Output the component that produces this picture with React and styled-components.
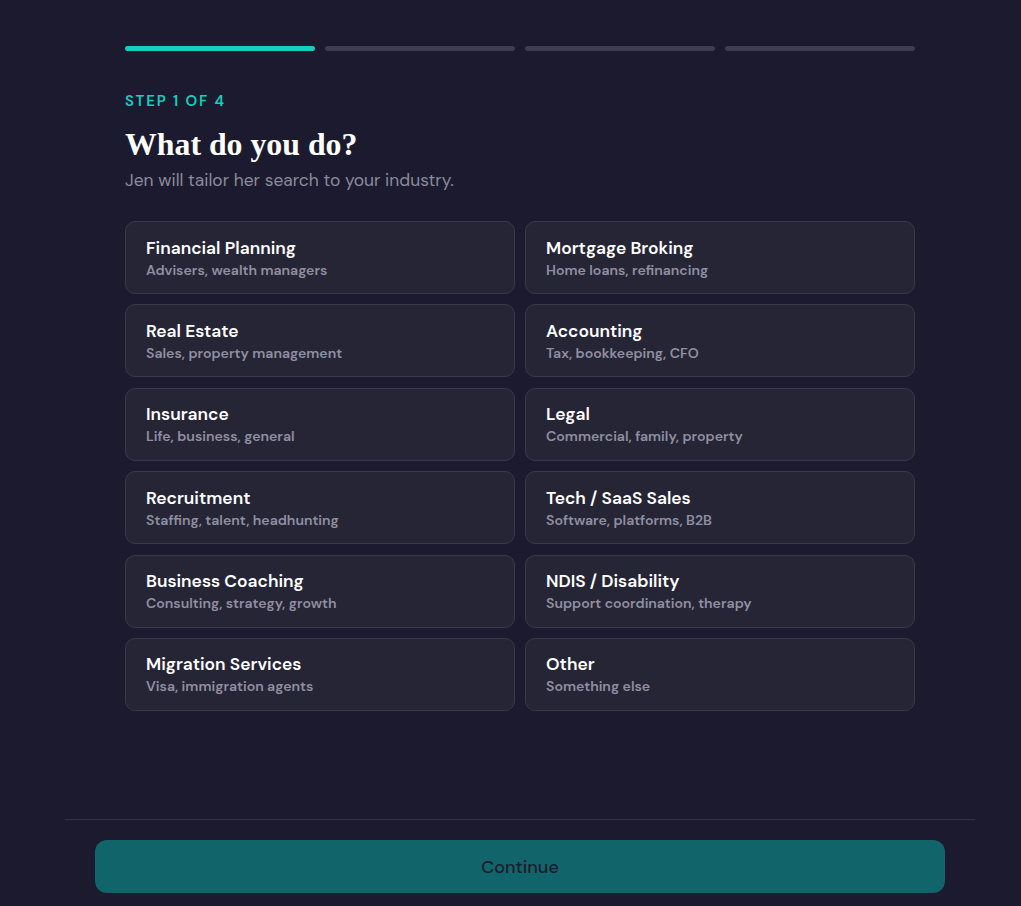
import React, { useState } from 'react'
import styled, { createGlobalStyle } from 'styled-components'

const GlobalStyle = createGlobalStyle`
  html, body {
    margin: 0;
    padding: 0;
    background: #1c1a2e;
  }
  body {
    font-family: 'DM Sans', Inter, 'Noto Sans', sans-serif;
    color: #ffffff;
  }
`

const Page = styled.div`
  min-height: 100vh;
  display: flex;
  flex-direction: column;
  width: 910px;
  margin-left: 65px;
  box-sizing: border-box;
`

const Main = styled.main`
  flex: 1;
  padding: 46px 60px 0;
`

const Progress = styled.div`
  display: grid;
  grid-template-columns: repeat(4, 1fr);
  gap: 10px;
`

const Segment = styled.div`
  height: 5px;
  border-radius: 3px;
  background: ${p => (p.$done ? '#13cfc0' : '#3d3c50')};
`

const StepLabel = styled.div`
  margin-top: 42px;
  font-size: 15px;
  font-weight: 600;
  letter-spacing: 1.8px;
  color: #13cfc0;
  line-height: 16px;
`

const Heading = styled.h1`
  margin: 16px 0 0;
  font-family: 'Liberation Serif', 'Times New Roman', serif;
  font-weight: 700;
  font-size: 31.8px;
  line-height: 40px;
  color: #ffffff;
`

const Subtitle = styled.p`
  margin: 3px 0 0;
  font-size: 17.4px;
  line-height: 24px;
  color: #8b8a9b;
`

const Grid = styled.div`
  margin-top: 29px;
  display: grid;
  grid-template-columns: 1fr 1fr;
  column-gap: 10px;
  row-gap: 10.4px;
`

const Card = styled.button`
  height: 73px;
  box-sizing: border-box;
  padding: 0 20px;
  display: flex;
  flex-direction: column;
  justify-content: center;
  align-items: flex-start;
  text-align: left;
  background: ${p => (p.$selected ? '#1f3a44' : '#262536')};
  border: 1px solid ${p => (p.$selected ? '#13cfc0' : '#3a3949')};
  border-radius: 10px;
  cursor: pointer;
  font-family: inherit;
`

const CardTitle = styled.span`
  font-size: 17.4px;
  font-weight: 600;
  color: #ffffff;
  line-height: 24px;
`

const CardSub = styled.span`
  font-size: 14.1px;
  font-weight: 600;
  color: #908fa1;
  line-height: 20px;
`

const Footer = styled.footer`
  border-top: 1px solid #33324a;
  padding: 20px 30px 13px;
`

const ContinueButton = styled.button`
  width: 100%;
  height: 53px;
  border: none;
  border-radius: 12px;
  background: #11656a;
  color: #1c1a2e;
  font-family: inherit;
  font-size: 18px;
  font-weight: 500;
  cursor: ${p => (p.disabled ? 'default' : 'pointer')};
`

const industries = [
  ['Financial Planning', 'Advisers, wealth managers'],
  ['Mortgage Broking', 'Home loans, refinancing'],
  ['Real Estate', 'Sales, property management'],
  ['Accounting', 'Tax, bookkeeping, CFO'],
  ['Insurance', 'Life, business, general'],
  ['Legal', 'Commercial, family, property'],
  ['Recruitment', 'Staffing, talent, headhunting'],
  ['Tech / SaaS Sales', 'Software, platforms, B2B'],
  ['Business Coaching', 'Consulting, strategy, growth'],
  ['NDIS / Disability', 'Support coordination, therapy'],
  ['Migration Services', 'Visa, immigration agents'],
  ['Other', 'Something else'],
]

export default function App () {
  const [selected, setSelected] = useState(null)
  const step = 1

  return (
    <>
      <GlobalStyle/>
      <Page>
        <Main>
          <Progress>
            {[1, 2, 3, 4].map(n => <Segment key={n} $done={n <= step}/>)}
          </Progress>
          <StepLabel>STEP {step} OF 4</StepLabel>
          <Heading>What do you do?</Heading>
          <Subtitle>Jen will tailor her search to your industry.</Subtitle>
          <Grid>
            {industries.map(([title, sub]) => (
              <Card key={title} $selected={selected === title} onClick={() => setSelected(title)}>
                <CardTitle>{title}</CardTitle>
                <CardSub>{sub}</CardSub>
              </Card>
            ))}
          </Grid>
        </Main>
        <Footer>
          <ContinueButton disabled={!selected}>Continue</ContinueButton>
        </Footer>
      </Page>
    </>
  )
}
